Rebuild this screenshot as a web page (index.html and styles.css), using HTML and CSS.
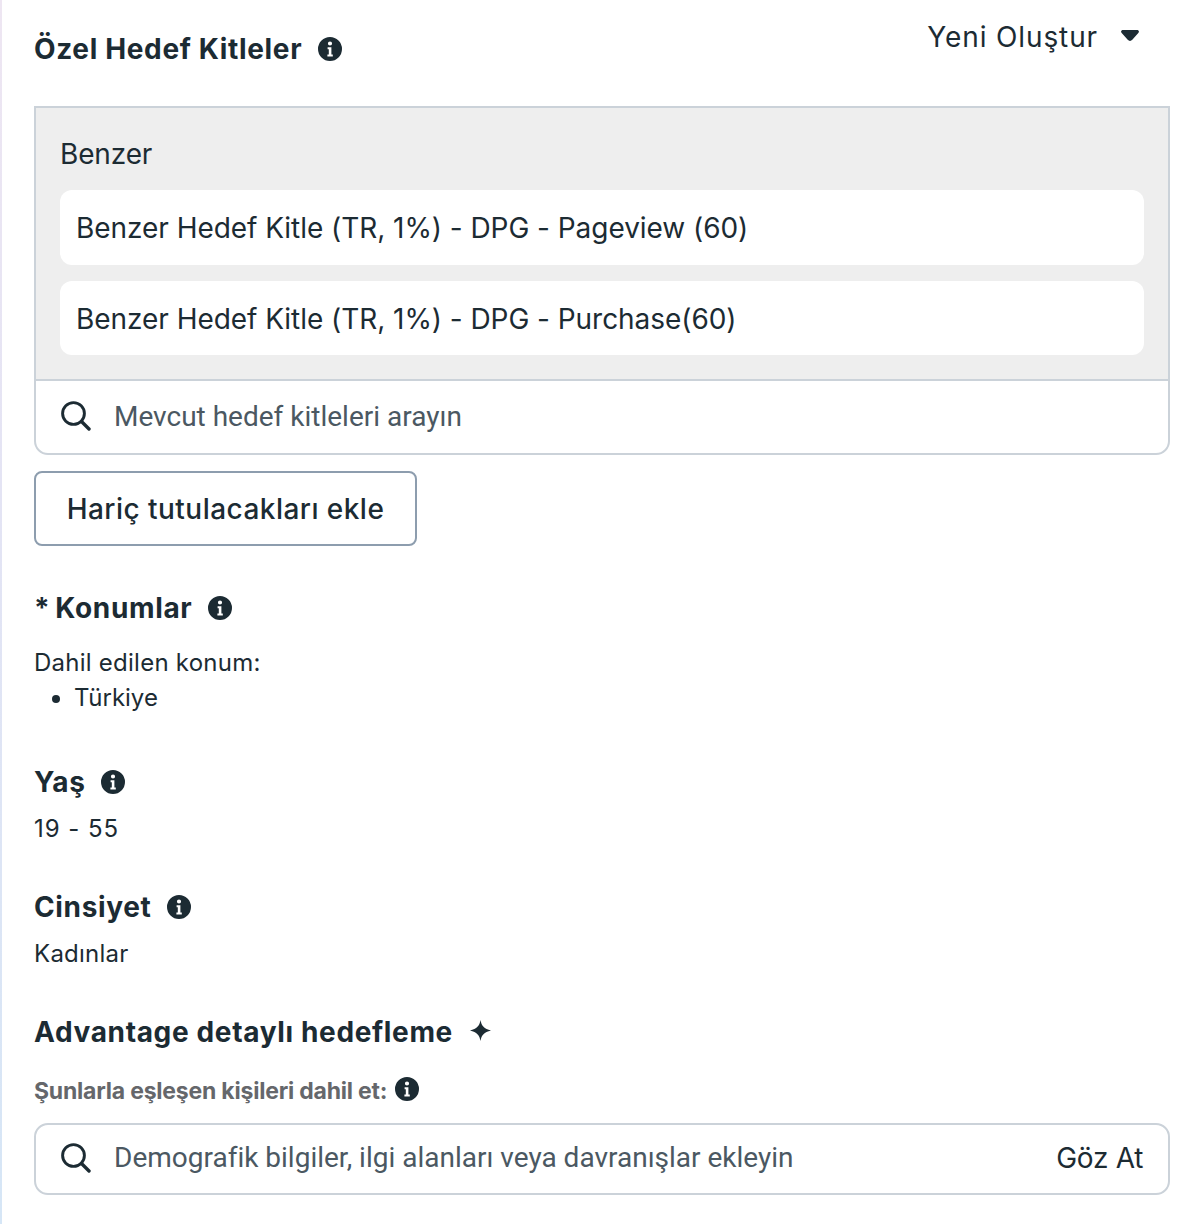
FILE: index.html
```html
<!DOCTYPE html>
<html lang="tr">
<head>
<meta charset="utf-8">
<title>Hedef Kitle</title>
<link rel="stylesheet" href="styles.css">
</head>
<body>
<svg class="defs" width="0" height="0" aria-hidden="true">
  <defs>
    <symbol id="info" viewBox="0 0 24 24">
      <path fill-rule="evenodd" d="M12 0a12 12 0 1 1 0 24a12 12 0 0 1 0-24zM12 4.4a2.1 2.1 0 1 0 0 4.2a2.1 2.1 0 0 0 0-4.2zM9.6 10.2v2h1.2v5.2h-1.4v2h5.4v-2h-1.4v-7.2z"/>
    </symbol>
    <symbol id="search" viewBox="0 0 30 30">
      <circle cx="12.5" cy="12.5" r="10.9" fill="none" stroke="currentColor" stroke-width="2.9"/>
      <path d="M20.5 20.5l7.5 7.5" fill="none" stroke="currentColor" stroke-width="3.4" stroke-linecap="round"/>
    </symbol>
  </defs>
</svg>
<main class="panel">
  <header class="top-row">
    <h2 class="heading heading-main">Özel Hedef Kitleler <svg class="info info-lg"><use href="#info"/></svg></h2>
    <div class="create">Yeni Oluştur<svg class="caret" viewBox="0 0 18 11"><path d="M2.2 0h13.6c2 0 2.8 1.6 1.5 3l-6 6.8c-1.3 1.5-3.3 1.5-4.6 0L.7 3C-.6 1.6.2 0 2.2 0z"/></svg></div>
  </header>

  <section class="audience-box">
    <div class="selected">
      <div class="group-label">Benzer</div>
      <div class="chip">Benzer Hedef Kitle (TR, 1%) - DPG - Pageview (60)</div>
      <div class="chip chip-second">Benzer Hedef Kitle (TR, 1%) - DPG - Purchase(60)</div>
    </div>
    <div class="search-row">
      <svg class="search-icon"><use href="#search"/></svg>
      <span class="placeholder">Mevcut hedef kitleleri arayın</span>
    </div>
  </section>

  <button class="exclude-btn" type="button">Hariç tutulacakları ekle</button>

  <section class="konum">
    <h3 class="heading"><span class="star">* </span>Konumlar <svg class="info"><use href="#info"/></svg></h3>
    <p class="body-text konum-label">Dahil edilen konum:</p>
    <ul class="konum-list"><li>Türkiye</li></ul>
  </section>

  <section class="yas">
    <h3 class="heading">Yaş <svg class="info"><use href="#info"/></svg></h3>
    <p class="body-text value age">19 - 55</p>
  </section>

  <section class="cinsiyet">
    <h3 class="heading">Cinsiyet <svg class="info"><use href="#info"/></svg></h3>
    <p class="body-text value">Kadınlar</p>
  </section>

  <section class="advantage">
    <h3 class="heading">Advantage detaylı hedefleme<svg class="sparkle" viewBox="0 0 22 22"><path d="M11 0c1 6.2 3.8 9.2 11 11c-7.2 1.8-10 4.8-11 11c-1-6.2-3.8-9.2-11-11c7.2-1.8 10-4.8 11-11z"/></svg></h3>
    <div class="include-label">Şunlarla eşleşen kişileri dahil et: <svg class="info"><use href="#info"/></svg></div>
    <div class="search-box">
      <svg class="search-icon"><use href="#search"/></svg>
      <span class="placeholder">Demografik bilgiler, ilgi alanları veya davranışlar ekleyin</span>
      <span class="browse">Göz At</span>
    </div>
  </section>
</main>
</body>
</html>
```

FILE: styles.css
```css
* { box-sizing: border-box; }
html, body { margin: 0; padding: 0; background: #fff; }
body {
  width: 1202px;
  height: 1224px;
  overflow: hidden;
  font-family: Inter, "Liberation Sans", sans-serif;
  color: #1c2b33;
  border-left: 2px solid;
  border-image: linear-gradient(180deg, #eee6f2 0%, #e4e4f4 40%, #d6e6f6 100%) 1;
}
.defs { position: absolute; }
.panel { padding: 0 32px 0 32px; }
.top-row { display: flex; justify-content: space-between; height: 106px; }
.heading {
  display: flex;
  align-items: center;
  margin: 0;
  font-size: 28px;
  line-height: 34px;
  font-weight: 700;
  letter-spacing: 0.65px;
  white-space: pre-wrap;
}
.star { letter-spacing: -0.5px; }
.heading-main { padding-top: 32px; height: 66px; }
.info { width: 24px; height: 24px; fill: #1c2b33; margin-left: 8.5px; flex: none; }
.create {
  display: flex;
  align-items: center;
  align-self: flex-start;
  height: 34px;
  margin-top: 20px;
  margin-right: 31px;
  font-size: 28px;
  letter-spacing: 0.88px;
}
.caret { width: 18px; height: 11px; margin-left: 23px; fill: #1c2b33; margin-top: -3px; }
.audience-box {
  width: 1136px;
  border: 2px solid #cbd2d9;
  border-radius: 0 0 14px 14px;
  height: 349px;
}
.selected {
  background: #eeeeee;
  height: 273px;
  padding: 26px 24px 0 24px;
  border-bottom: 2px solid #cbd2d9;
}
.group-label { font-size: 28px; line-height: 40px; margin-bottom: 16px; letter-spacing: -0.15px; }
.chip {
  background: #fff;
  border-radius: 12px;
  height: 75px;
  padding: 0 16px;
  display: flex;
  align-items: center;
  font-size: 28px;
  letter-spacing: -0.05px;
  margin-bottom: 16px;
}
.chip-second { height: 74px; margin-bottom: 0; padding-top: 2px; }
.search-row { display: flex; align-items: center; height: 72px; padding: 0 0 2px 25px; }
.search-icon { width: 30px; height: 30px; color: #1c2b33; flex: none; margin-right: 23px; }
.placeholder { font-family: Roboto, sans-serif; font-size: 28px; color: #4b5862; }
.exclude-btn {
  display: block;
  margin-top: 16px;
  width: 383px;
  height: 75px;
  background: #fff;
  border: 2px solid #8d9dae;
  border-radius: 8px;
  font-family: inherit;
  font-size: 28px;
  font-weight: 500;
  letter-spacing: 0.46px;
  color: #1c2b33;
  padding: 0;
}
.konum { margin-top: 45px; }
.body-text { margin: 0; font-size: 24px; line-height: 35px; letter-spacing: 0.25px; }
.konum-label { margin-top: 20px; }
.konum-list { margin: 0; padding: 0 0 0 40px; font-size: 24px; line-height: 35px; }
.yas { margin-top: 50px; }
.value { margin-top: 12px; }
.age { letter-spacing: 0.95px; }
.cinsiyet { margin-top: 44px; }
.advantage { margin-top: 44px; }
.sparkle { width: 21px; height: 21px; margin-left: 17px; fill: #1c2b33; margin-top: -3px; flex: none; }
.include-label {
  display: flex;
  align-items: center;
  margin-top: 27px;
  font-size: 23px;
  line-height: 30px;
  font-weight: 700;
  letter-spacing: -0.21px;
  color: #65676b;
  white-space: pre-wrap;
}
.include-label .info { margin-left: 2px; margin-top: -4px; }
.search-box {
  display: flex;
  align-items: center;
  margin-top: 17px;
  width: 1136px;
  height: 72px;
  border: 2px solid #cbd2d9;
  border-radius: 14px;
  padding: 0 25px 3px;
}
.browse { margin-left: auto; font-size: 28px; letter-spacing: -0.3px; }
```
